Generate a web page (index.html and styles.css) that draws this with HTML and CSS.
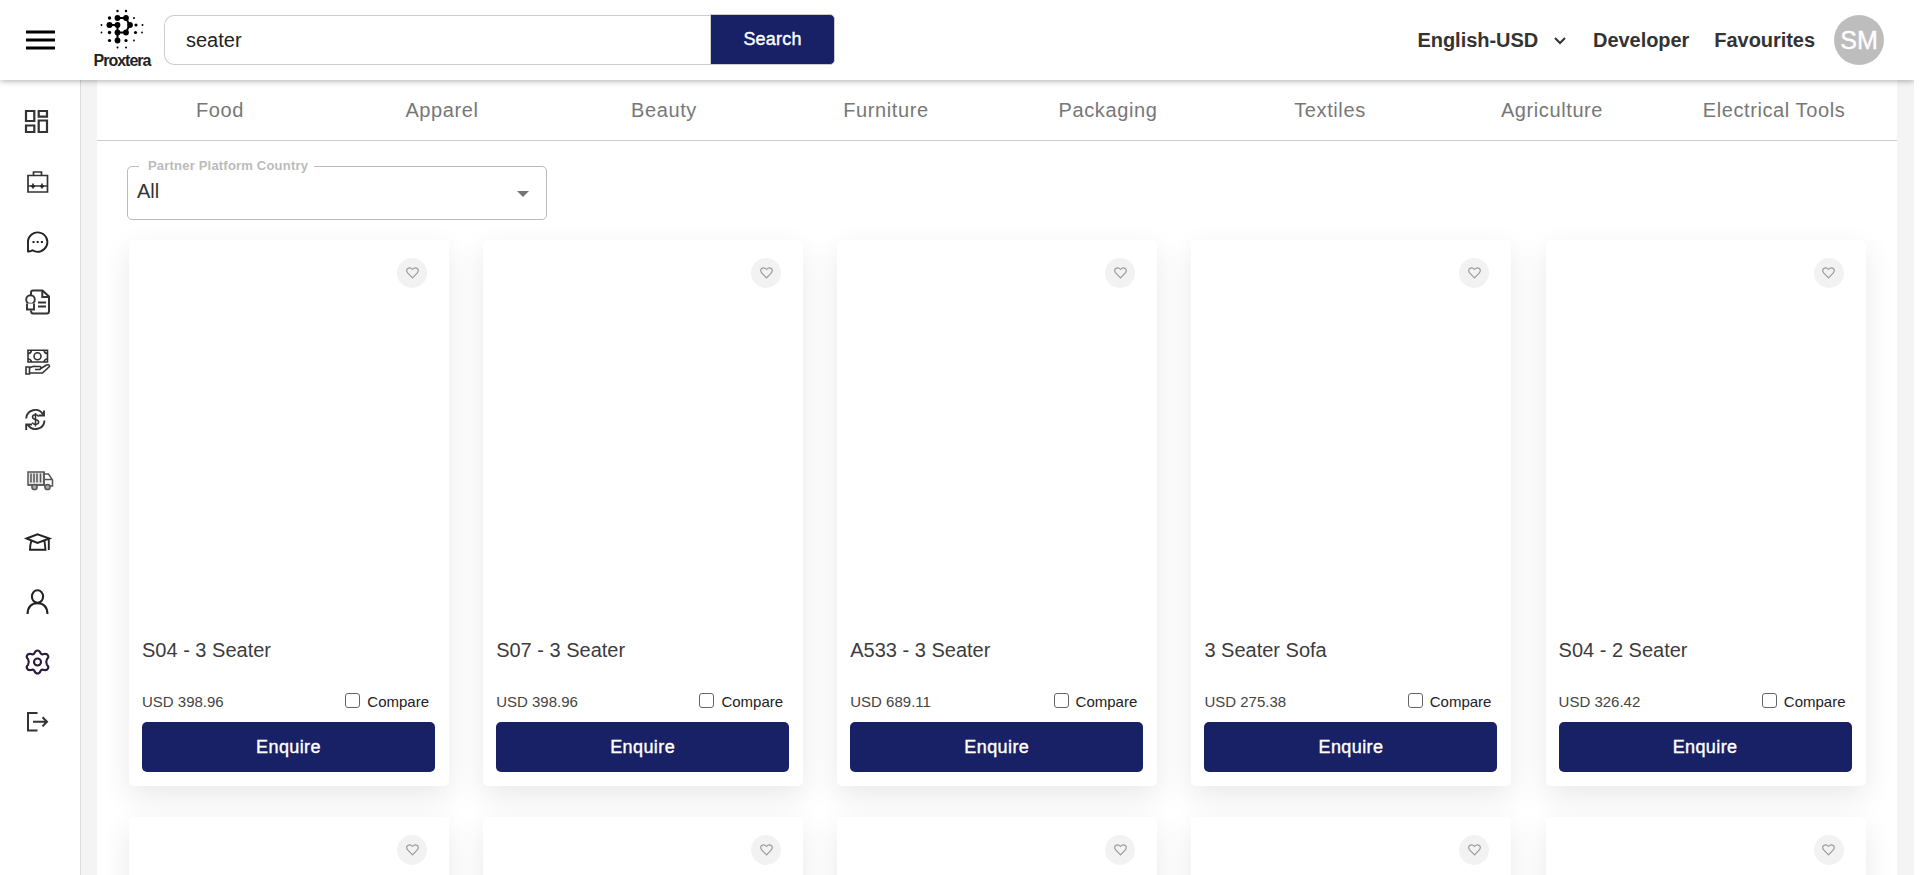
FILE: index.html
```html
<!DOCTYPE html>
<html lang="en">
<head>
<meta charset="utf-8">
<title>Proxtera</title>
<link rel="stylesheet" href="styles.css">
</head>
<body>
<header class="topbar">
  <svg class="menu" width="29" height="20" viewBox="0 0 29 20"><path d="M0 2h29M0 10h29M0 18h29" stroke="#000" stroke-width="3"/></svg>
  <div class="brand">
    <svg width="46" height="42" viewBox="0 0 46 42">
      <g fill="#000"><circle cx="17.500" cy="3" r="1.200"/><circle cx="26" cy="3" r="1.200"/><circle cx="9.500" cy="10" r="1.700"/><circle cx="17.500" cy="10" r="2.900"/><circle cx="26" cy="10" r="2.900"/><circle cx="34" cy="10" r="1"/><circle cx="1.500" cy="17" r=".9"/><circle cx="9.500" cy="17" r="3"/><circle cx="17.500" cy="17" r="2.900"/><circle cx="30" cy="17" r="2.900"/><circle cx="36" cy="17" r="1.600"/><circle cx="42.500" cy="17" r="1"/><circle cx="1.500" cy="24.500" r=".9"/><circle cx="9.500" cy="24.500" r="1.700"/><circle cx="17.500" cy="24.500" r="2.900"/><circle cx="26" cy="24.500" r="2.900"/><circle cx="35.500" cy="24.500" r="1.600"/><circle cx="42" cy="24.500" r=".9"/><circle cx="9.500" cy="32.500" r="1.600"/><circle cx="17.500" cy="32.500" r="2.900"/><circle cx="26" cy="32.500" r="1.600"/><circle cx="34" cy="32.500" r=".9"/><circle cx="17.500" cy="39.500" r="1"/><circle cx="26" cy="39.500" r="1"/></g>
      <path d="M9.500 17h8v15.500M17.500 10H26l3.500 7L26 24.500h-8.500" fill="none" stroke="#000" stroke-width="2"/>
    </svg>
    <span class="brand-name">Proxtera</span>
  </div>
  <div class="search"><div class="search-input">seater</div><div class="search-btn">Search</div></div>
  <nav class="links">
    <span class="lang">English-USD</span>
    <svg class="chev" width="12" height="8" viewBox="0 0 12 8"><path d="M1 1l5 5 5-5" fill="none" stroke="#333" stroke-width="2"/></svg>
    <span class="dev">Developer</span>
    <span class="fav">Favourites</span>
    <span class="avatar">SM</span>
  </nav>
</header>
<div class="body">
  <aside class="side">
    <svg viewBox="0 0 28 28"><path d="M3 3h8.300v10H3zM15.700 3H24v5.700h-8.300zM3 17.500h8.300v6.500H3zM15.700 12.500H24V24h-8.300z" fill="none" stroke="#333" stroke-width="2.200"/></svg>
    <svg viewBox="0 0 28 28"><path d="M5 7.500h19.500v16.500H5zM10.500 7V4h8v3M5 18h19.500M10 15.500v5M19 15.500v5" fill="none" stroke="#333" stroke-width="1.700"/><path d="M8.500 17.500h3v1.500h-3zM17.500 17.500h3v1.500h-3z" stroke="#333"/></svg>
    <svg viewBox="0 0 28 28"><path d="M5 23.500v-9.500a9.700 9.700 0 1 1 4.500 8.300q-2 1.500-4.500 1.200z" fill="none" stroke="#222" stroke-width="1.900" stroke-linejoin="round"/><path d="M9.500 14h2M13.700 14h2M17.900 14h2" stroke="#222" stroke-width="2"/></svg>
    <svg viewBox="0 0 28 28"><path d="M8 7.500V4.500Q8 2.500 10 2.500h9.500l6.500 6V23q0 2.500-2 2.500H10q-2 0-2-3M19.300 3v6h6M15 14.500h8M15 18.500h8" fill="none" stroke="#333" stroke-width="2"/><circle cx="7.500" cy="11.500" r="4.300" fill="#fff" stroke="#333" stroke-width="1.900"/><path d="M4 15.500v6h7v-6" fill="#fff" stroke="#333" stroke-width="1.900"/></svg>
    <svg viewBox="0 0 28 28"><g fill="none" stroke="#333" stroke-width="1.600"><path d="M5 2.300h19.500v11.700H5z"/><circle cx="14.500" cy="8.200" r="3.500"/><path d="M5 5.500q3 0 3.500-3M21 2.500q.5 3 3.500 3M5 11q3 0 3.500 3M21 14q.5-3 3.500-3"/><path d="M3 19h3.500v7H3zM6.500 20q3-2 6-1.500h4.500q2 1 0 3h-5M17 21l6.500-4q3-1 3 1.500l-7 6.500h-13"/></g></svg>
    <svg viewBox="0 0 28 28"><g fill="none" stroke="#333" stroke-width="1.900"><path d="M3.200 10.500a9 9 0 0 1 16.800-4M21.500 12.500a9 9 0 0 1-16.800 4"/><path d="M15.500 7.500h5.500V2.500M9 16.500H3.200V22"/><path d="M15.500 8.500q-1-1.700-3-1.700-3 0-3 2.300 0 1.800 3 2.400t3.200 2.600q0 2.300-3.200 2.300-2.500 0-3.300-1.900M12.500 5v13.500" stroke-width="1.500"/></g></svg>
    <svg viewBox="0 0 28 28"><g fill="none" stroke="#555" stroke-width="1.500"><path d="M5 4h16v13H5z" fill="#e4e4e4"/><path d="M8 5.500v9M11 5.500v9M14 5.500v9M17.500 5.500v9M5 17h16v-13M21 6h4.500l4 6v6H21M22 11.500h6.500"/><circle cx="11.500" cy="19" r="2.600" fill="#aaa"/><circle cx="24.500" cy="19" r="2.600" fill="#aaa"/></g></svg>
    <svg viewBox="0 0 28 28"><g fill="none" stroke="#222" stroke-width="1.900"><path d="M3.500 10.500L14.500 6.300l12 4.200-12 4.500zM8.300 13q-1.300 4-1.300 8.700h15.500L21.500 13M25.800 10.500V22"/></g></svg>
    <svg viewBox="0 0 28 28"><g fill="none" stroke="#222" stroke-width="2.100"><ellipse cx="14.500" cy="8.600" rx="5.600" ry="6.300"/><path d="M4.500 26q.5-10.800 10-10.800t10 10.800"/></g></svg>
    <svg viewBox="0 0 28 28"><path d="M11.500 5q1-2.500 3-2.500t3 2.500q1 2 3.500 1 3-.5 4 1.500t-1 3.500q-1.500 3 0 6 2 1.500 1 3.500t-4 1.500q-2.500-1-3.500 1-1 2.500-3 2.500t-3-2.500q-1-2-3.500-1-3 .5-4-1.500T5 17q1.500-3 0-6-2-1.500-1-3.500T8 6q2.500 1 3.500-1z" fill="none" stroke="#2a1a3e" stroke-width="2.100"/><circle cx="14.500" cy="14" r="3.500" fill="none" stroke="#2a1a3e" stroke-width="2.100"/></svg>
    <svg viewBox="0 0 28 28"><path d="M14.500 5H5v17.500h9.500M10 13.800h14M19.500 9.300l4.500 4.500-4.500 4.500" fill="none" stroke="#333" stroke-width="2"/></svg>
  </aside>
  <main class="main">
    <div class="cats"><span>Food</span><span>Apparel</span><span>Beauty</span><span>Furniture</span><span>Packaging</span><span>Textiles</span><span>Agriculture</span><span>Electrical Tools</span></div>
    <div class="filter"><span class="filter-label">Partner Platform Country</span><span class="filter-value">All</span><i class="caret"></i></div>
    <div class="grid" id="grid"></div>
  </main>
</div>
<script src="cards.js"></script>
</body>
</html>
```
FILE: styles.css
```css
* { box-sizing: border-box; }
body { margin: 0; height: 875px; overflow: hidden; background: #fff; font-family: "Liberation Sans", Arial, sans-serif; color: #333; }
.topbar { position: relative; z-index: 2; width: 1914px; height: 80px; background: #fff; display: flex; align-items: flex-start; box-shadow: 0 1px 6px rgba(0,0,0,.32); clip-path: inset(0 0 -10px 0); }
.menu { margin: 30px 0 0 26px; }
.brand { width: 58px; margin: 8px 0 0 38px; display: flex; flex-direction: column; align-items: center; }
.brand svg { margin-left: 2px; }
.brand-name { font: bold 16px/18px "Liberation Sans", Arial, sans-serif; letter-spacing: -1px; color: #222; margin-top: 2px; }
.search { display: flex; margin: 14px 0 0 13px; width: 671px; height: 51px; }
.search-input { flex: 1; margin-top: 1px; border: 1px solid #ccc; border-right: 0; border-radius: 10px 0 0 10px; padding-left: 21px; font-size: 20px; line-height: 49px; color: #222; }
.search-btn { width: 125px; border: 1px solid #ccc; border-radius: 0 5px 5px 0; background: #182166; color: #fff; font-size: 18px; line-height: 49px; letter-spacing: .2px; text-align: center; -webkit-text-stroke: .4px #fff; }
.links { margin: 15px 30px 0 auto; height: 50px; display: flex; align-items: center; font-weight: bold; font-size: 20px; letter-spacing: -.05px; white-space: nowrap; }
.chev { margin: 2px 27px 0 16px; }
.fav { margin: 0 19px 0 25px; }
.avatar { width: 50px; height: 50px; border-radius: 50%; background: #bdbdbd; color: #fff; font-size: 25px; font-weight: normal; letter-spacing: 0; line-height: 51px; text-align: center; -webkit-text-stroke: .4px #fff; }
.body { display: flex; width: 1914px; height: 795px; background: #f4f4f4; }
.side { width: 81px; background: #fff; border-right: 1px solid #ddd; padding: 28px 0 0 23px; display: flex; flex-direction: column; gap: 32px; }
.side svg { width: 28px; height: 28px; flex: none; overflow: visible; }
.main { width: 1800px; margin-left: 16px; background: #fff; overflow: hidden; }
.cats { height: 61px; padding: 0 12px; border-bottom: 1px solid #ccc; display: grid; grid-template-columns: repeat(8, 1fr); text-align: center; font-size: 20px; line-height: 60px; letter-spacing: .6px; color: #777; }
.filter { position: relative; width: 420px; height: 54px; margin: 25px 0 20px 30px; border: 1px solid #bbb; border-radius: 5px; padding-left: 9px; }
.filter-label { position: absolute; left: 11px; top: -10px; padding: 0 6px 0 9px; background: #fff; font-size: 13px; font-weight: bold; line-height: 18px; letter-spacing: .2px; color: #bbb; white-space: nowrap; }
.filter-value { font-size: 20px; line-height: 49px; }
.caret { position: absolute; right: 17px; top: 24px; border: 6.5px solid transparent; border-top-color: #757575; border-bottom: 0; }
.grid { display: grid; grid-template-columns: repeat(5, 320px); column-gap: 34.15px; row-gap: 31px; padding-left: 32px; }
.card { height: 546px; border-radius: 5px; background: #fff; box-shadow: 0 10px 30px rgba(0,0,0,.09); padding: 18px 14px 14px 13px; display: flex; flex-direction: column; }
.heart { width: 30px; height: 30px; border-radius: 50%; background: #f2f2f2; align-self: flex-end; margin-right: 8px; display: flex; align-items: center; justify-content: center; }
.title { margin-top: 350px; font-size: 20px; line-height: 24px; color: #3c3c3c; }
.row { display: flex; align-items: center; margin-top: 27px; height: 24px; font-size: 15px; color: #444; }
.check { width: 15px; height: 15px; border: 1px solid #666; border-radius: 3px; margin: -2px 7px 0 auto; }
.compare { color: #222; margin-right: 6px; }
.enquire { height: 50px; margin-top: 9px; border-radius: 5px; background: #182166; color: #fff; font-size: 18px; line-height: 51px; letter-spacing: .4px; text-align: center; -webkit-text-stroke: .4px #fff; }
```
FILE: cards.js
```js
const products = [
  ["S04 - 3 Seater", "398.96"], ["S07 - 3 Seater", "398.96"], ["A533 - 3 Seater", "689.11"], ["3 Seater Sofa", "275.38"], ["S04 - 2 Seater", "326.42"]
];
const heart = '<div class="heart"><svg width="13" height="12" viewBox="0 0 14 13"><path d="M7 11.800L2 6.700Q-.5 3.500 1.800 1.600 4.500-.2 7 2.700 9.500-.2 12.200 1.600 14.500 3.500 12 6.700z" fill="none" stroke="#999" stroke-width="1.200"/></svg></div>';
const full = products.map(([name, price]) => `<div class="card">${heart}<div class="title">${name}</div><div class="row"><span>USD ${price}</span><i class="check"></i><span class="compare">Compare</span></div><div class="enquire">Enquire</div></div>`);
const next = products.map(() => `<div class="card">${heart}</div>`);
document.getElementById("grid").innerHTML = full.concat(next).join("");
```
